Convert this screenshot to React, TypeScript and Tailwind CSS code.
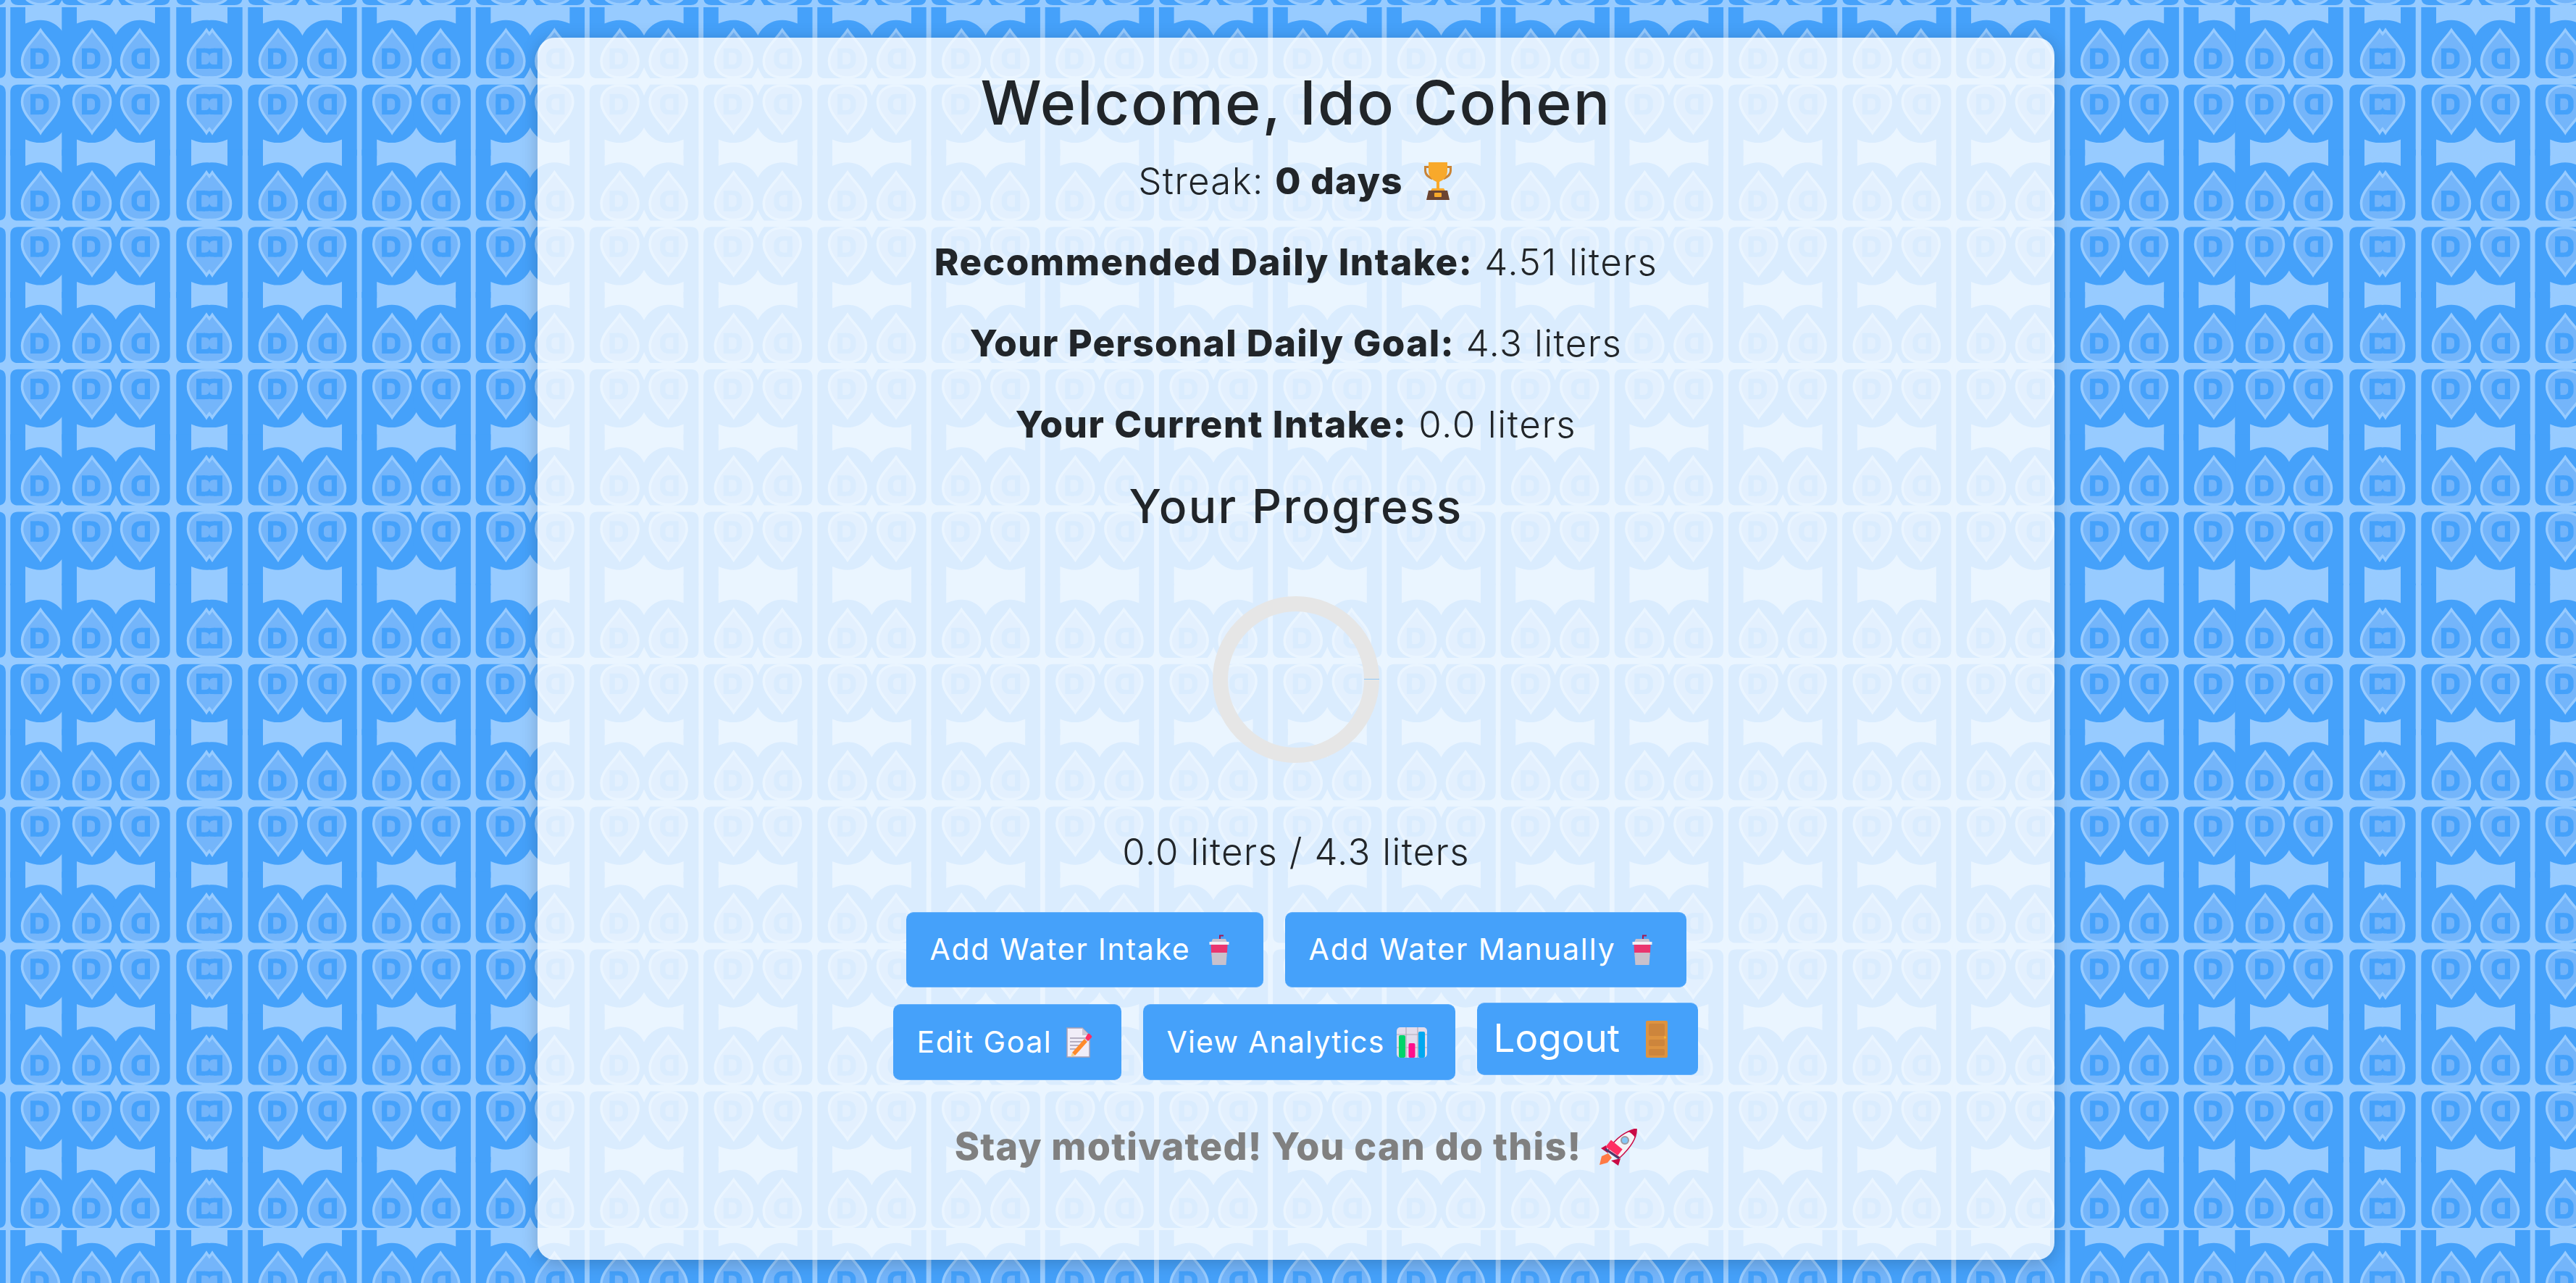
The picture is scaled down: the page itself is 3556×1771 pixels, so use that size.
import type { ReactNode } from "react";

// the page wallpaper: b/d letters with a drop inside, mirrored up and down
const LINES = [112.4, 308.9, 505.4, 702, 912.4, 1109, 1306, 1502];

const tileCells: { x: number; flip: boolean }[] = [{ x: 293, flip: true }];
for (let k = 0; k <= 16; k++) {
  tileCells.push({ x: 384 + 157.2 * k, flip: false });
  tileCells.push({ x: 451 + 157.2 * k, flip: true });
}
tileCells.push({ x: 3056, flip: false }, { x: 3127, flip: false }, { x: 3193, flip: true }, { x: 3285, flip: false });

const halves: { line: number; down: boolean; reach: number }[] = [
  { line: 11.4, down: false, reach: 102.4 },
  { line: 1699.4, down: false, reach: 102.4 },
  { line: 1800.4, down: false, reach: 102.4 },
];
LINES.forEach((line) => {
  halves.push({ line, down: false, reach: line === 912.4 ? 107 : 102.4 });
  halves.push({ line, down: true, reach: line === 702 ? 106 : 102.4 });
});

function Cell({ x, line, flip, down, reach }: { x: number; line: number; flip: boolean; down: boolean; reach: number }) {
  return (
    <g transform={`translate(${x} ${line}) scale(${flip ? -1 : 1} ${down ? -1 : 1})`}>
      <path
        fill="#45a1fa"
        d={`M-41.7 ${-reach}H-21V-80Q-10 -84.7 0 -84.7C22 -84.7 38 -66 38 -44C38 -26 31 -12 25 -4.4H-31Q-41.7 -4.4 -41.7 -15Z`}
      />
      <path
        fill="#74b5fa"
        stroke="#97cbff"
        strokeWidth="3.5"
        d="M0 -71C-9 -57 -25.5 -45 -25.5 -28C-25.5 -13 -14 -5.5 0 -5.5C14 -5.5 25.5 -13 25.5 -28C25.5 -45 9 -57 0 -71Z"
      />
      <rect x="-14" y="-45.7" width="25.4" height="28.3" rx="11" fill="#45a1fa" />
      <rect x="-14" y="-45.7" width="12" height="28.3" fill="#45a1fa" />
      <rect x="-6.7" y="-39.7" width="10.7" height="16.3" rx="5.3" fill="#74b5fa" />
      <rect x="-6.7" y="-39.7" width="5" height="16.3" fill="#74b5fa" />
    </g>
  );
}

function Wallpaper() {
  const offsets = [
    { dx: -3000, id: "tile-a" },
    { dx: 0, id: "tile-b" },
    { dx: 3000, id: "tile-c" },
  ];
  return (
    <svg className="absolute inset-0" width="3556" height="1771" viewBox="0 0 3556 1771">
      <defs>
        <clipPath id="tile-a"><rect x="-2711" y="0" width="3000" height="1771" /></clipPath>
        <clipPath id="tile-b"><rect x="289" y="0" width="3000" height="1771" /></clipPath>
        <clipPath id="tile-c"><rect x="3289" y="0" width="3000" height="1771" /></clipPath>
      </defs>
      {offsets.map((o) => (
        <g key={o.id} clipPath={`url(#${o.id})`}>
          {tileCells
            .filter((c) => c.x + o.dx > -70 && c.x + o.dx < 3630)
            .map((c) =>
              halves.map((h, i) => (
                <Cell key={`${c.x}-${i}`} x={c.x + o.dx} line={h.line} flip={c.flip} down={h.down} reach={h.reach} />
              ))
            )}
        </g>
      ))}
    </svg>
  );
}

const Trophy = () => (
  <svg width="44" height="52" viewBox="0 0 44 52" className="shrink-0">
    <path d="M9 5H3v6c0 7 5 11 11 13l1-3c-5-2-9-5-9-10V8h3zM35 5h6v6c0 7-5 11-11 13l-1-3c5-2 9-5 9-10V8h-3z" fill="#c98436" />
    <path d="M9 0h26v12c0 8-6 13-11 15v9h-4v-9C15 25 9 20 9 12z" fill="#f8a92b" />
    <path d="M14 36h16l2 3H12z" fill="#f8a92b" />
    <path d="M9 39h26l3 13H6z" fill="#6b4431" />
    <rect x="17" y="42" width="10" height="6" rx="1" fill="#f8a92b" />
  </svg>
);

const Cup = () => (
  <svg width="28" height="42" viewBox="0 0 28 42" className="shrink-0">
    <path d="M15 11V1.5h5" fill="none" stroke="#a31a55" strokeWidth="2" />
    <path d="M5 6h18l2 5H3z" fill="#c9c1cc" />
    <rect x="0.5" y="10" width="27" height="4" fill="#f3eff5" />
    <path d="M2.5 14h23l-.7 14H3.2z" fill="#ea356f" />
    <path d="M3.2 25h21.6L23.5 42h-19z" fill="#c9c1cc" />
  </svg>
);

const Memo = () => (
  <svg width="40" height="42" viewBox="0 0 40 42" className="shrink-0">
    <path d="M2 1h21l10 10v30H2z" fill="#f1edf8" stroke="#a9a0b4" strokeWidth="1.5" />
    <path d="M23 1l10 10H23z" fill="#cdc6d3" />
    <path d="M6 15h21M6 20h21M6 25h17M6 30h10" stroke="#a39bb0" strokeWidth="1.6" />
    <path d="M9 35l4 4 17-19-4-4z" fill="#ff8a2b" />
    <path d="M7 41l2-6 4 4z" fill="#f6d28d" />
    <path d="M26 16l4 4 2-2-4-4z" fill="#cdc6d3" />
    <path d="M28 14l4 4 5-5q1-2-1-3l-2-2q-2-1-3 1z" transform="translate(-1 1)" fill="#ff2e63" />
  </svg>
);

const Chart = () => (
  <svg width="42" height="42" viewBox="0 0 42 42" className="shrink-0">
    <rect width="42" height="42" rx="5" fill="#e2dcec" />
    <path d="M13 0v42M29 0v42M0 10h42M0 28h42" stroke="#b2abba" strokeWidth="1.2" />
    <rect x="3" y="11" width="9" height="31" rx="2" fill="#00d46a" />
    <rect x="16.500" y="22" width="9" height="20" rx="2" fill="#ff0f8c" />
    <rect x="30" y="6" width="9" height="36" rx="2" fill="#00a8f0" />
  </svg>
);

const Door = () => (
  <svg width="30" height="51" viewBox="0 0 30 51" className="shrink-0">
    <rect width="30" height="51" rx="2" fill="#dd9340" />
    <rect x="4" y="4" width="22" height="17" rx="2" fill="#cd853c" />
    <rect x="4" y="26" width="22" height="9" rx="2" fill="#cd853c" />
    <rect x="4" y="39" width="22" height="9" rx="2" fill="#cd853c" />
    <circle cx="26.500" cy="23" r="1.700" fill="#f9b233" />
  </svg>
);

const Rocket = () => (
  <svg width="52" height="51" viewBox="0 0 52 51" className="shrink-0">
    <path d="M12 34l-9 4-3 12 11-3 6-7z" fill="#ff7a45" />
    <path d="M9 23L2 27l10 7zM29 41l-3 10 -10-7z" fill="#c90a45" />
    <path d="M51 0c1 10-5 23-23 40L12 30C22 12 38 3 51 0z" fill="#f5f3f6" />
    <path d="M51 0c0 4-1 8-2 12-3-4-6-7-10-8 4-2 8-3 12-4z" fill="#c90a45" />
    <path d="M51 0c1 10-5 23-23 40L12 30C22 12 38 3 51 0z" fill="none" stroke="#c90a45" strokeWidth="1.5" />
    <circle cx="35" cy="16" r="5" fill="#85c8f7" stroke="#9c9ba3" strokeWidth="2" />
    <path d="M16 20l-8 10 18 13 7-9z" fill="#ff2e63" transform="translate(1 -3) scale(.93)" />
    <path d="M8 31l19 13" stroke="#4b3a6b" strokeWidth="3" transform="translate(0 -3)" />
  </svg>
);

function ActionButton({ className, children }: { className: string; children: ReactNode }) {
  return (
    <button className={`flex items-center rounded-[10px] border-y border-[#64b0fb] bg-[#45a1fa] text-white ${className}`}>
      {children}
    </button>
  );
}

export default function App() {
  return (
    <div className="relative flex h-screen justify-center overflow-hidden bg-[#97cbff] pl-[22px] font-[Inter,sans-serif] text-[#212529]">
      <Wallpaper />
      <div className="relative mt-[52px] flex h-[1687px] w-[2094px] flex-col items-center rounded-[24px] bg-white/80 shadow-[0_4px_24px_rgba(0,0,0,0.2)]">
        <h1 className="mt-[30px] text-[84px] leading-[120px] font-medium tracking-[2.2px]">Welcome, Ido Cohen</h1>
        <div className="mt-[13px] flex h-[70px] items-center text-[51px] font-[350] tracking-[1.3px]">
          <span>Streak:&nbsp;</span>
          <b className="font-extrabold">0 days</b>
          <span className="ml-[26px]"><Trophy /></span>
        </div>
        <p className="mt-[42px] text-[51px] leading-[70px] font-[350] tracking-[1.6px]"><b className="font-extrabold">Recommended Daily Intake:</b> 4.51 liters</p>
        <p className="mt-[42px] text-[51px] leading-[70px] font-[350] tracking-[1.4px]"><b className="font-extrabold">Your Personal Daily Goal:</b> 4.3 liters</p>
        <p className="mt-[42px] text-[51px] leading-[70px] font-[350] tracking-[1.6px]"><b className="font-extrabold">Your Current Intake:</b> 0.0 liters</p>
        <h2 className="mt-[38px] text-[64px] leading-[80px] font-medium tracking-[2.3px]">Your Progress</h2>
        <svg className="mt-[84px]" width="230" height="230" viewBox="0 0 230 230">
          <circle cx="115" cy="115" r="104.500" fill="none" stroke="#e6e6e6" strokeWidth="21" />
          <path d="M209 114.500h21" stroke="#90c8f8" strokeWidth="1" />
        </svg>
        <p className="mt-[88px] text-[51px] leading-[70px] font-[350] tracking-[1.3px]">0.0 liters / 4.3 liters</p>
        <div className="mt-[48px] flex gap-[30px]">
          <ActionButton className="h-[104px] w-[493px] px-[33px] text-[41px] tracking-[1.7px]">
            Add Water Intake
            <span className="ml-auto pr-[14px]"><Cup /></span>
          </ActionButton>
          <ActionButton className="h-[104px] w-[554px] px-[33px] text-[41px] tracking-[1.9px]">
            Add Water Manually
            <span className="ml-auto pr-[14px]"><Cup /></span>
          </ActionButton>
        </div>
        <div className="mt-[23px] flex items-start gap-[30px] pr-[2px]">
          <ActionButton className="h-[105px] w-[315px] px-[33px] text-[41px] tracking-[1.5px]">
            Edit Goal
            <span className="ml-auto pr-[4px]"><Memo /></span>
          </ActionButton>
          <ActionButton className="h-[105px] w-[431px] px-[33px] text-[41px] tracking-[1.2px]">
            View Analytics
            <span className="ml-auto pr-[6px]"><Chart /></span>
          </ActionButton>
          <ActionButton className="-mt-[2px] h-[100px] w-[305px] px-[23px] text-[53px]">
            Logout
            <span className="ml-auto pr-[19px]"><Door /></span>
          </ActionButton>
        </div>
        <div className="mt-[53px] flex items-center text-[52px] font-extrabold tracking-[1.2px] text-[#808080]">
          Stay motivated! You can do this!
          <span className="ml-[25px]"><Rocket /></span>
        </div>
      </div>
    </div>
  );
}
